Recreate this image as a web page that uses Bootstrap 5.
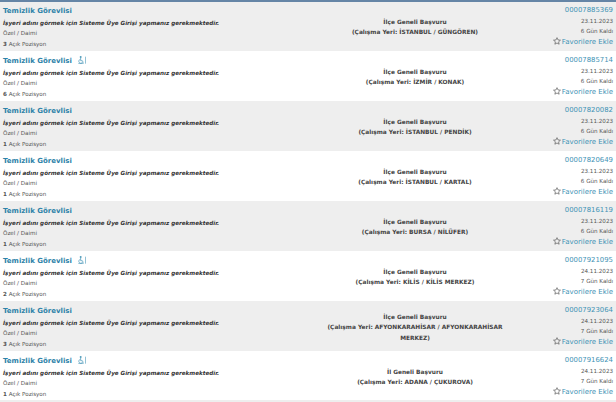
<!DOCTYPE html>
<html lang="tr"><head><meta charset="utf-8">
<link href="https://cdn.jsdelivr.net/npm/bootstrap@5.3.0/dist/css/bootstrap.min.css" rel="stylesheet">
<style>
html,body{background:#fff;overflow:hidden}
body{font-family:"DejaVu Sans",sans-serif;color:#555;font-size:5.6px;line-height:10.5px}
.listing{border-top:2px solid #6585a6;height:402px;padding-top:1px;background:#eee}
.job{height:50px;padding:4px 3px 0 3px;background:#fff}
.job:nth-child(odd){background:#eee}
.job:first-child{height:48px;padding-top:2px}
.job:last-child{height:49px}
.jobleft{width:314px}
.jobmid{width:196px;font-size:5.85px;font-weight:600;color:#444;padding-top:11.5px}
.job.three .jobmid{padding-top:6.5px}
.jobright{flex:1;color:#555}
.jobtitle{font-size:7px;font-weight:700;color:#2d82a8;height:11px;line-height:11px;margin-top:1px}
.jobnote{font-size:5.62px;font-style:italic;font-weight:700;color:#333;margin-top:1px;line-height:10px}
.jobnum{font-size:6.9px;color:#3f93b5;height:10.5px}
.jobfav{font-size:7px;color:#3f93b5;margin-top:.5px}
.jobfav svg{width:8px;height:8px;vertical-align:-1px;margin-right:1px}
.wheel{width:8px;height:8px;margin-left:6px;vertical-align:-1px}
</style></head><body>
<div class="listing" id="list"></div>
<template id="row">
<div class="job d-flex">
<div class="jobleft">
<div class="jobtitle"><span class="t">Temizlik Görevlisi</span><svg class="wheel d-none" viewBox="0 0 12 12" fill="none" stroke="#3f93b5" stroke-width="1"><circle cx="4" cy="1.5" r="1" fill="#3f93b5"/><path d="M4 3v4h2.5l1.5 3M3.5 5a3 3 0 1 0 3.5 4M.5 11.5h8M11.5 1v10.5"/></svg></div>
<div class="jobnote">İşyeri adını görmek için Sisteme Üye Girişi yapmanız gerekmektedir.</div>
<div>Özel / Daimi</div>
<div><b class="n"></b> Açık Pozisyon</div>
</div>
<div class="jobmid text-center"><div class="a"></div><div class="c"></div></div>
<div class="jobright text-end">
<div class="jobnum"></div>
<div class="d"></div>
<div class="g"></div>
<div class="jobfav text-nowrap"><svg viewBox="0 0 12 12" fill="none" stroke="#555" stroke-width="1"><path d="M6 1l1.5 3.4 3.7.4-2.8 2.4.8 3.6L6 9l-3.2 1.8.8-3.6L.8 4.8l3.7-.4z"/></svg>Favorilere Ekle</div>
</div>
</div>
</template>
<script>
var D=[
[3,0,"İlçe Geneli Başvuru","İSTANBUL / GÜNGÖREN","00007885369","23.11.2023",6],
[6,1,"İlçe Geneli Başvuru","İZMİR / KONAK","00007885714","23.11.2023",6],
[1,0,"İlçe Geneli Başvuru","İSTANBUL / PENDİK","00007820082","23.11.2023",6],
[1,0,"İlçe Geneli Başvuru","İSTANBUL / KARTAL","00007820649","23.11.2023",6],
[1,0,"İlçe Geneli Başvuru","BURSA / NİLÜFER","00007816119","23.11.2023",6],
[2,1,"İlçe Geneli Başvuru","KİLİS / KİLİS MERKEZ","00007921095","24.11.2023",7],
[3,0,"İlçe Geneli Başvuru","AFYONKARAHİSAR / AFYONKARAHİSAR MERKEZ","00007923064","24.11.2023",7],
[1,1,"İl Geneli Başvuru","ADANA / ÇUKUROVA","00007916624","24.11.2023",7]];
var L=document.getElementById('list'),T=document.getElementById('row');
D.forEach(function(r){var f=T.content.cloneNode(true),q=function(s){return f.querySelector(s)};
q('.n').textContent=r[0];if(r[1])q('.wheel').classList.remove('d-none');
q('.a').textContent=r[2];q('.c').textContent='(Çalışma Yeri: '+r[3]+')';
q('.jobnum').textContent=r[4];q('.d').textContent=r[5];q('.g').textContent=r[6]+' Gün Kaldı';
if(r[3].length>30)q('.job').classList.add('three');
L.appendChild(f)});
</script>
<script src="https://cdn.jsdelivr.net/npm/bootstrap@5.3.0/dist/js/bootstrap.bundle.min.js"></script>
</body></html>
